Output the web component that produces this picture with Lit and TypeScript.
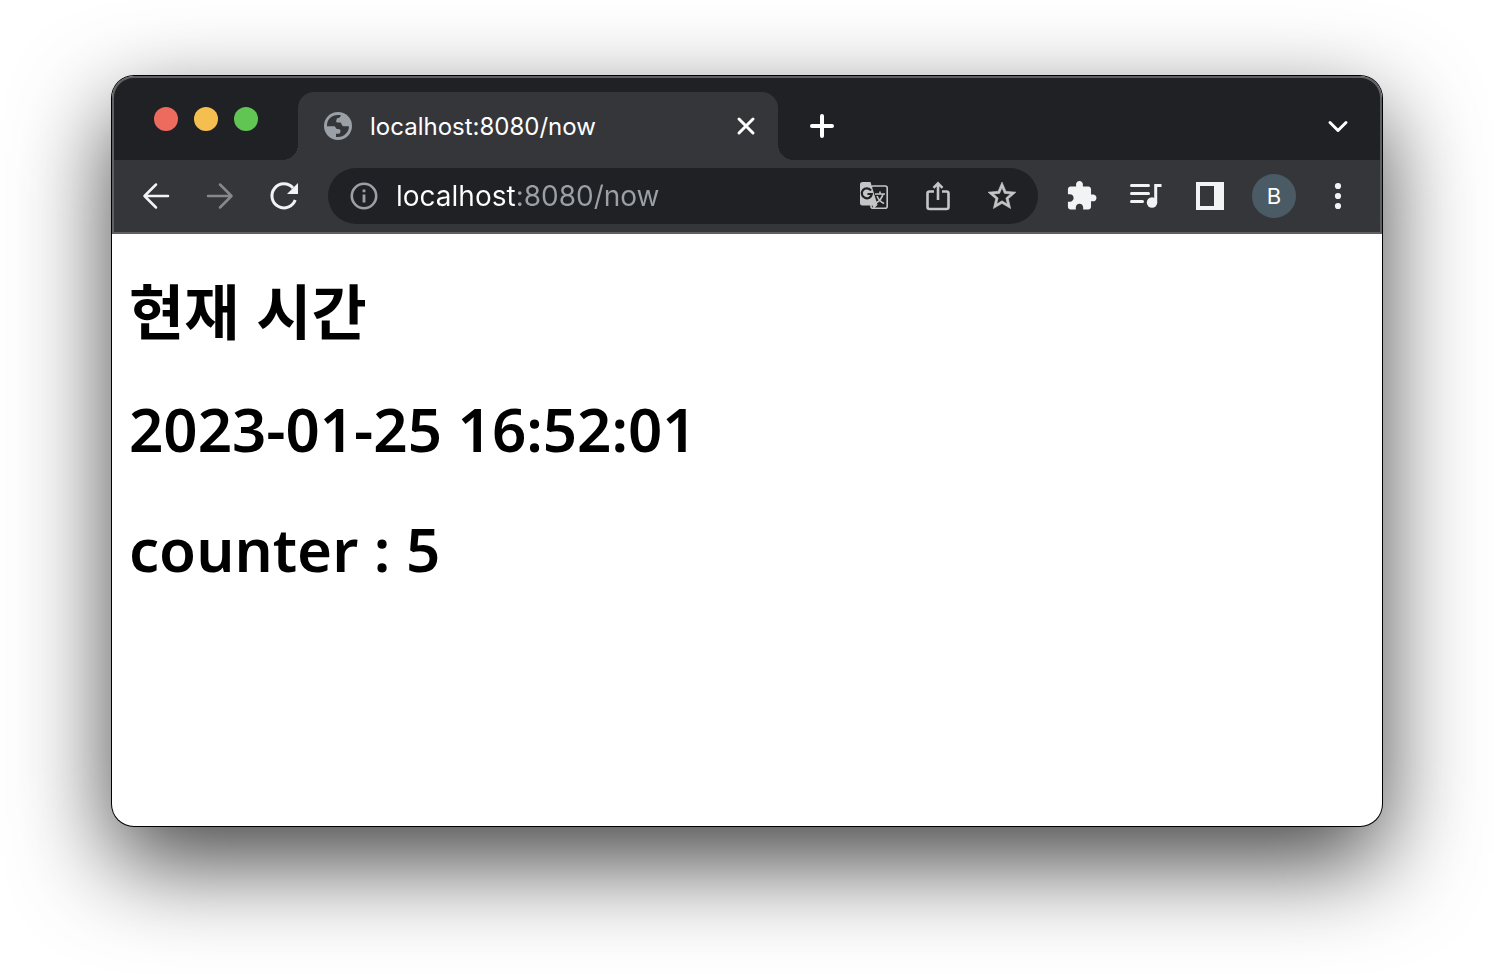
import { LitElement, html, css, svg } from "lit";
import { customElement, state } from "lit/decorators.js";

const stroke = (d: string, width: number) =>
  svg`<path d=${d} fill="none" stroke="currentColor" stroke-width=${width} stroke-linecap="round" stroke-linejoin="round"></path>`;

const icons = {
  globe: svg`<circle cx="16" cy="16" r="14" fill="currentColor"></circle>
    <path fill="#35363a" d="M5 15.500C5 9.500 9.500 5 16 5H18.800C18.800 7 17.500 8.200 15 8.200L14 11.500C15 13 16.500 12.500 18.200 12.500C19.800 13 19.800 16.200 21.500 16.200H27C27 22 22 27 16 27H14V23.800H16.500C18 23.800 18.500 22.500 18.500 21C18.500 19.500 17.500 19 15.500 19C13.500 19 14 16.200 12 16.200H5Z"></path>`,
  close: stroke("M9 9L23 23M23 9L9 23", 3),
  plus: svg`<path d="M16 6V26M6 16H26" fill="none" stroke="currentColor" stroke-width="4" stroke-linecap="round"></path>`,
  chevron: stroke("M8 12.500L16 20.500L24 12.500", 3),
  back: stroke("M28 16H4.500M16 4.500L4.500 16L16 27.500", 2.5),
  forward: stroke("M4 16H27.500M16 4.500L27.500 16L16 27.500", 2.5),
  reload: svg`<path d="M27.200 20A12 12 0 1 1 25 8" fill="none" stroke="currentColor" stroke-width="3"></path><path fill="currentColor" d="M30 3V14H19Z"></path>`,
  info: svg`<circle cx="16" cy="16" r="12.200" fill="none" stroke="currentColor" stroke-width="2.600"></circle><path fill="currentColor" d="M14.600 9.500H17.400V12.300H14.600ZM14.600 14.500H17.400V22.500H14.600Z"></path>`,
  translate: svg`<rect x="13" y="6" width="16.200" height="22.200" rx="2" fill="none" stroke="currentColor" stroke-width="1.600"></rect>
    <path fill="currentColor" d="M4.500 2H12.500L19.500 25L15.500 29L14.500 25.500H4.500Q2 25.500 2 23V4.500Q2 2 4.500 2Z"></path>
    <path d="M13 10.500A5 5 0 1 0 13.800 14H9.500" fill="none" stroke="#202124" stroke-width="2.200"></path>
    <path d="M17 14H27M22 11.500V14M25 14Q23.500 20 18 23M19 16Q21 21 26 23.500" fill="none" stroke="currentColor" stroke-width="1.600"></path>`,
  share: svg`<path d="M12 11.500H7.500Q5.500 11.500 5.500 13.500V27Q5.500 29 7.500 29H24.500Q26.500 29 26.500 27V13.500Q26.500 11.500 24.500 11.500H20M16 20V4M11.500 7.800L16 3.300L20.500 7.800" fill="none" stroke="currentColor" stroke-width="2.600"></path>`,
  star: svg`<path transform="translate(-.8 -.8) scale(1.400)" fill="currentColor" stroke="currentColor" stroke-width=".4" d="M22 9.240l-7.190-.62L12 2 9.190 8.630 2 9.240l5.460 4.730L5.820 21 12 17.270 18.180 21l-1.630-7.030L22 9.240zM12 15.400l-3.760 2.270 1-4.280-3.320-2.880 4.380-.38L12 6.100l1.710 4.040 4.380.38-3.320 2.880 1 4.280L12 15.400z"></path>`,
  puzzle: svg`<path transform="translate(-.8 -.4) scale(1.360)" fill="currentColor" d="M20.500 11H19V7c0-1.100-.9-2-2-2h-4V3.500C13 2.120 11.880 1 10.500 1S8 2.120 8 3.500V5H4c-1.100 0-1.990.9-1.990 2v3.800H3.500c1.490 0 2.700 1.210 2.700 2.700s-1.210 2.700-2.700 2.700H2V20c0 1.100.9 2 2 2h3.800v-1.500c0-1.490 1.210-2.700 2.700-2.700s2.700 1.210 2.700 2.700V22H17c1.100 0 2-.9 2-2v-4h1.500c1.380 0 2.500-1.120 2.500-2.500S21.880 11 20.500 11z"></path>`,
  media: svg`<path d="M1.500 5.500H18.500M1.500 13.500H18.500M1.500 21.500H12.500" fill="none" stroke="currentColor" stroke-width="3" stroke-linecap="round"></path><circle cx="22" cy="22.500" r="5.200" fill="currentColor"></circle><path fill="currentColor" d="M24.200 4H31.500V7H27.200V22.500H24.200Z"></path>`,
  panel: svg`<path fill="currentColor" fill-rule="evenodd" d="M2 2H30V30H2ZM6 6V26H20V6Z"></path>`,
  dots: svg`<g fill="currentColor"><circle cx="16" cy="6" r="3.100"></circle><circle cx="16" cy="16" r="3.100"></circle><circle cx="16" cy="26" r="3.100"></circle></g>`,
};

const icon = (name: keyof typeof icons) =>
  html`<svg class="icon" viewBox="0 0 32 32" aria-hidden="true">${icons[name]}</svg>`;

@customElement("app-root")
export class AppRoot extends LitElement {
  @state() private counter = 5;

  static styles = css`
    :host {
      display: grid;
      box-sizing: border-box;
      min-height: 100vh;
      padding: 76px 112px 148px;
      overflow: hidden;
      background: #fff;
      font-family: Inter, "Noto Sans", sans-serif;
    }
    * { box-sizing: border-box; }
    button {
      display: grid;
      place-items: center;
      padding: 0;
      border: 0;
      background: none;
      color: inherit;
      font: inherit;
    }
    .icon { display: block; width: 32px; height: 32px; }
    .window {
      display: flex;
      flex-direction: column;
      min-width: 0;
      border-radius: 22px;
      background: #fff;
      box-shadow: 0 0 0 1px #000, 0 36px 96px rgba(0, 0, 0, 0.74);
    }
    .chrome {
      border: 2px solid #5f6063;
      border-radius: 22px 22px 0 0;
      background: #202124;
      color: #fff;
    }
    .strip { display: flex; height: 82px; padding: 14px 10px 0 40px; }
    .lights { display: flex; gap: 16px; padding-top: 15px; margin-right: 40px; }
    .light { width: 24px; height: 24px; border-radius: 50%; }
    .red { background: #ed6a5e; }
    .yellow { background: #f5bf4f; }
    .green { background: #61c554; }
    .tab {
      position: relative;
      display: flex;
      align-items: center;
      gap: 16px;
      width: 480px;
      padding: 0 16px 0 24px;
      border-radius: 16px 16px 0 0;
      background: #35363a;
      font-size: 24px;
    }
    .tab::before, .tab::after {
      content: "";
      position: absolute;
      bottom: 0;
      width: 16px;
      height: 16px;
    }
    .tab::before { right: 100%; background: radial-gradient(circle at 0 0, transparent 16px, #35363a 16px); }
    .tab::after { left: 100%; background: radial-gradient(circle at 100% 0, transparent 16px, #35363a 16px); }
    .title { flex: 1; }
    .favicon { color: #9aa0a6; }
    .new-tab { width: 88px; }
    .tab-search { width: 64px; margin-left: auto; }
    .toolbar {
      display: flex;
      align-items: center;
      height: 72px;
      padding: 0 10px;
      background: #35363a;
      color: #f1f3f4;
    }
    .tool { flex: none; width: 64px; height: 56px; }
    .tool:disabled { color: #87888a; }
    .omnibox {
      display: flex;
      flex: 1;
      min-width: 0;
      margin: 0 12px;
      padding: 0 4px;
      border-radius: 28px;
      background: #202124;
      color: #c4c5c7;
    }
    .site { color: #9aa0a6; }
    .address {
      flex: 1;
      min-width: 0;
      padding: 0;
      border: 0;
      outline: 0;
      background: linear-gradient(90deg, #fff 120px, #9aa0a6 120px);
      background-clip: text;
      -webkit-background-clip: text;
      -webkit-text-fill-color: transparent;
      font: 28px Inter, sans-serif;
    }
    .avatar {
      display: grid;
      place-items: center;
      width: 44px;
      height: 44px;
      border-radius: 50%;
      background: #4a5b65;
      color: #fff;
      font-size: 22px;
    }
    .page { padding: 31px 17px; color: #000; }
    h1 {
      margin: 0 0 32px;
      font: 600 60px/88px "Noto Sans", "Noto Sans CJK KR", sans-serif;
    }
    .korean { font-family: "Noto Sans CJK KR", sans-serif; font-weight: 700; }
  `;

  render() {
    return html`
      <div class="window">
        <header class="chrome">
          <div class="strip">
            <div class="lights">
              <button class="light red" aria-label="Close window"></button>
              <button class="light yellow" aria-label="Minimize window"></button>
              <button class="light green" aria-label="Zoom window"></button>
            </div>
            <div class="tab">
              <span class="favicon">${icon("globe")}</span>
              <span class="title">localhost:8080/now</span>
              <button aria-label="Close tab">${icon("close")}</button>
            </div>
            <button class="new-tab" aria-label="New tab">${icon("plus")}</button>
            <button class="tab-search" aria-label="Search tabs">${icon("chevron")}</button>
          </div>
          <nav class="toolbar">
            <button class="tool" aria-label="Back">${icon("back")}</button>
            <button class="tool" aria-label="Forward" disabled>${icon("forward")}</button>
            <button class="tool" aria-label="Reload">${icon("reload")}</button>
            <div class="omnibox">
              <button class="tool site" aria-label="Site information">${icon("info")}</button>
              <input class="address" aria-label="Address" .value=${"localhost:8080/now"} spellcheck="false" />
              <button class="tool" aria-label="Translate">${icon("translate")}</button>
              <button class="tool" aria-label="Share">${icon("share")}</button>
              <button class="tool" aria-label="Bookmark">${icon("star")}</button>
            </div>
            <button class="tool" aria-label="Extensions">${icon("puzzle")}</button>
            <button class="tool" aria-label="Media">${icon("media")}</button>
            <button class="tool" aria-label="Side panel">${icon("panel")}</button>
            <button class="tool" aria-label="Profile"><span class="avatar">B</span></button>
            <button class="tool" aria-label="Menu">${icon("dots")}</button>
          </nav>
        </header>
        <main class="page">
          <h1 class="korean" lang="ko">현재 시간</h1>
          <h1>2023-01-25 16:52:01</h1>
          <h1>counter : ${this.counter}</h1>
        </main>
      </div>
    `;
  }
}
